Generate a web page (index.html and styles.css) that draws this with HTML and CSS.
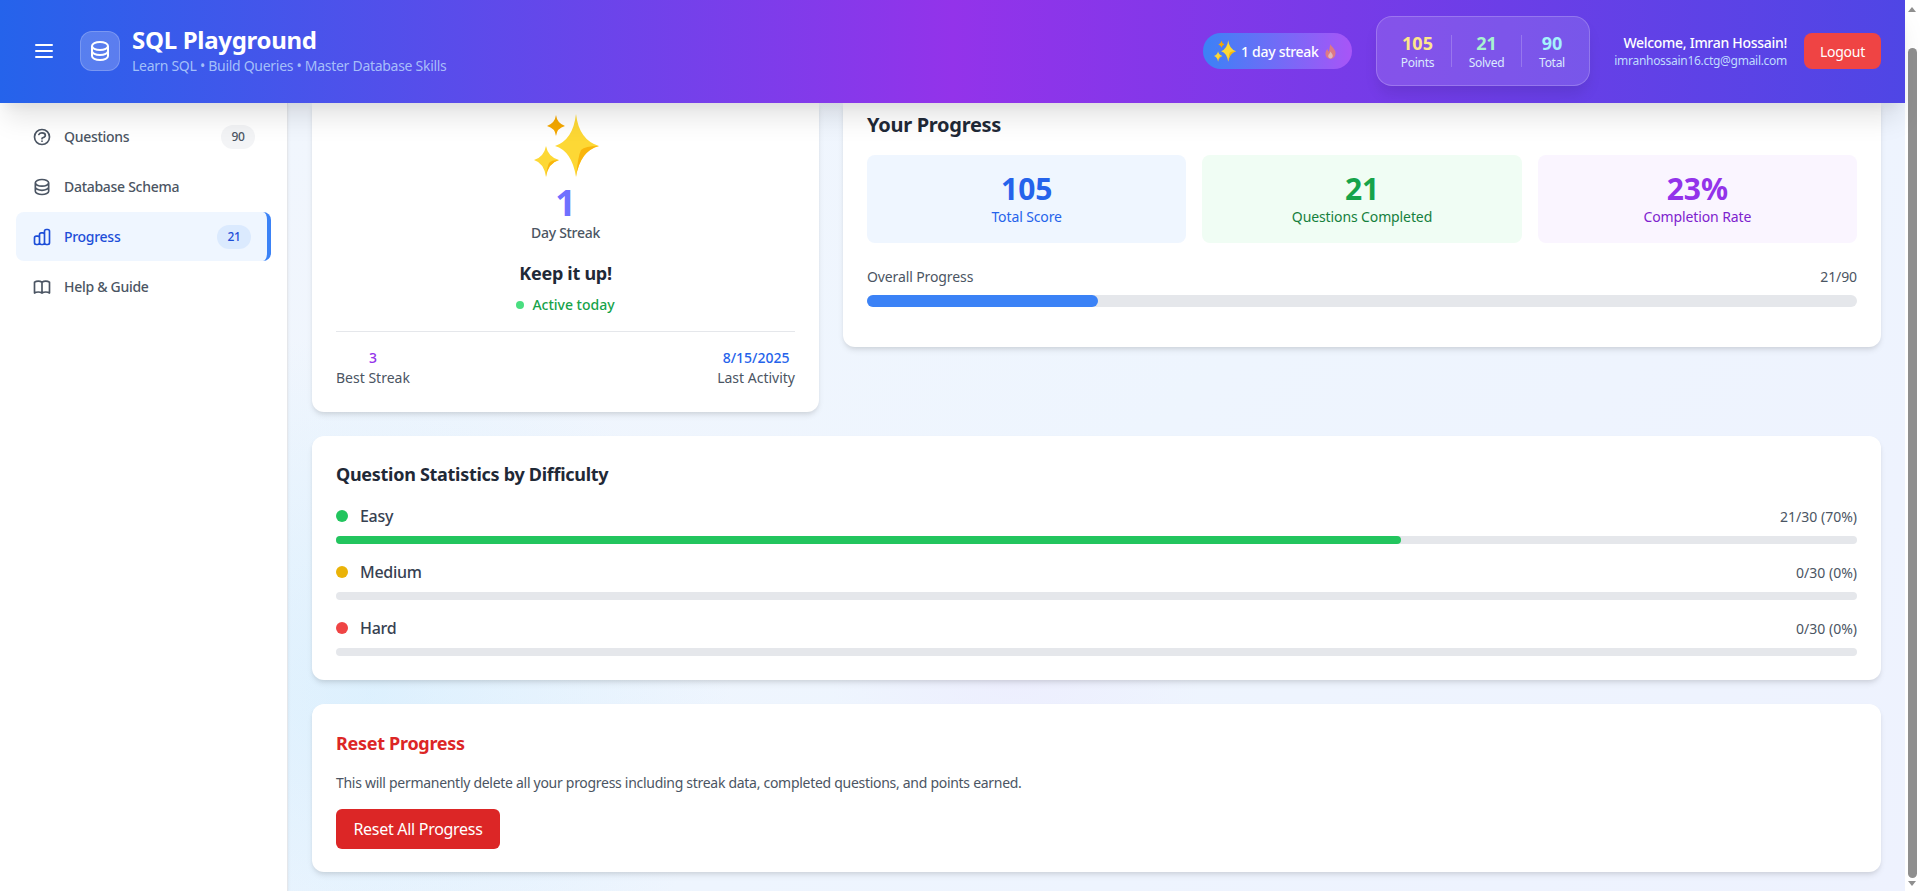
FILE: index.html
```html
<!DOCTYPE html>
<html lang="en">
<head>
    <meta charset="UTF-8">
    <meta name="viewport" content="width=device-width, initial-scale=1.0">
    <title>SQL Playground</title>
    <link rel="stylesheet" href="styles.css">
</head>
<body>

<svg class="defs" width="0" height="0">
    <symbol id="sparkles" viewBox="0 0 65 63">
        <path fill="#fdd835" d="M42 0Q45 26 65 32Q46 37 42 63Q38 37 21 32Q39 26 42 0Z"/>
        <path fill="#f9b50c" d="M42 63Q46 37 65 32Q51 32 47 36Q44 42 42 63Z"/>
        <path fill="#f5a800" d="M22 1Q23 9 31 12Q23 14 22 22Q21 14 13 12Q21 9 22 1Z"/>
        <path fill="#fdd835" d="M12 32Q14 43 25 46Q14 49 12 63Q10 49 0 46Q10 43 12 32Z"/>
        <path fill="#f9b50c" d="M12 63Q14 49 25 46Q17 46 15 49Q13 53 12 63Z"/>
    </symbol>
</svg>

<div class="page">
    <!-- Top bar -->
    <header class="topbar">
        <svg class="menu-icon" viewBox="0 0 24 24" fill="none" stroke="currentColor" stroke-width="2" stroke-linecap="round"><path d="M4 6h16M4 12h16M4 18h16"/></svg>
        <div class="logo">
            <svg viewBox="0 0 24 24" fill="none" stroke="currentColor" stroke-width="2" stroke-linecap="round" stroke-linejoin="round"><path d="M4 7v10c0 2.21 3.582 4 8 4s8-1.79 8-4V7M4 7c0 2.21 3.582 4 8 4s8-1.79 8-4M4 7c0-2.21 3.582-4 8-4s8 1.79 8 4m0 5c0 2.21-3.582 4-8 4s-8-1.79-8-4"/></svg>
        </div>
        <div class="brand">
            <h1>SQL Playground</h1>
            <p>Learn SQL • Build Queries • Master Database Skills</p>
        </div>

        <div class="streak-pill">
            <svg class="pill-sparkle"><use href="#sparkles"/></svg>
            <span>1 day streak</span>
            <svg class="pill-flame" viewBox="0 0 16 18"><path fill="#f4845f" d="M8 0c1 3 5 5 6 9 1 5-2 9-6 9s-7-3-6-8c.4-2 1.5-3 2.5-4 0 2 .7 3 1.5 3C7 7 6.500 3 8 0z"/><path fill="#fbd5a5" d="M8 9c.5 2 3 3 2.800 5.500C10.600 16.500 9.400 17.500 8 17.500s-2.800-1-2.800-3C5.200 12.500 7.500 11.500 8 9z"/></svg>
        </div>

        <div class="score-box">
            <div class="score score-first">
                <strong class="yellow">105</strong>
                <span>Points</span>
            </div>
            <div class="score">
                <strong class="mint">21</strong>
                <span>Solved</span>
            </div>
            <div class="score score-last">
                <strong class="cyan">90</strong>
                <span>Total</span>
            </div>
        </div>

        <div class="user">
            <div class="user-name">Welcome, Imran Hossain!</div>
            <div class="user-email">imranhossain16.ctg@gmail.com</div>
        </div>
        <button class="logout">Logout</button>
    </header>

    <div class="body-row">
        <!-- Sidebar -->
        <nav class="sidebar">
            <a class="nav-item">
                <svg viewBox="0 0 24 24" fill="none" stroke="currentColor" stroke-width="2" stroke-linecap="round" stroke-linejoin="round"><path d="M8.228 9c.549-1.165 2.030-2 3.772-2 2.210 0 4 1.343 4 3 0 1.400-1.278 2.575-3.006 2.907-.542.104-.994.540-.994 1.093m0 3h.01M21 12a9 9 0 11-18 0 9 9 0 0118 0z"/></svg>
                <span>Questions</span>
                <em class="badge">90</em>
            </a>
            <a class="nav-item">
                <svg viewBox="0 0 24 24" fill="none" stroke="currentColor" stroke-width="2" stroke-linecap="round" stroke-linejoin="round"><path d="M4 7v10c0 2.21 3.582 4 8 4s8-1.79 8-4V7M4 7c0 2.21 3.582 4 8 4s8-1.79 8-4M4 7c0-2.21 3.582-4 8-4s8 1.79 8 4m0 5c0 2.21-3.582 4-8 4s-8-1.79-8-4"/></svg>
                <span>Database Schema</span>
            </a>
            <a class="nav-item active">
                <svg viewBox="0 0 24 24" fill="none" stroke="currentColor" stroke-width="2" stroke-linecap="round" stroke-linejoin="round"><path d="M9 19v-6a2 2 0 00-2-2H5a2 2 0 00-2 2v6a2 2 0 002 2h2a2 2 0 002-2zm0 0V9a2 2 0 012-2h2a2 2 0 012 2v10m-6 0a2 2 0 002 2h2a2 2 0 002-2m0 0V5a2 2 0 012-2h2a2 2 0 012 2v14a2 2 0 01-2 2h-2a2 2 0 01-2-2z"/></svg>
                <span>Progress</span>
                <em class="badge">21</em>
            </a>
            <a class="nav-item">
                <svg viewBox="0 0 24 24" fill="none" stroke="currentColor" stroke-width="2" stroke-linecap="round" stroke-linejoin="round"><path d="M12 6.253v13m0-13C10.832 5.477 9.246 5 7.500 5S4.168 5.477 3 6.253v13C4.168 18.477 5.754 18 7.500 18s3.332.477 4.500 1.253m0-13C13.168 5.477 14.754 5 16.500 5c1.747 0 3.332.477 4.500 1.253v13C19.832 18.477 18.247 18 16.500 18c-1.746 0-3.332.477-4.500 1.253"/></svg>
                <span>Help &amp; Guide</span>
            </a>
        </nav>

        <!-- Main content, scrolled down a little under the top bar -->
        <main class="content">
            <div class="top-grid">
                <section class="card streak-card">
                    <svg class="big-sparkle"><use href="#sparkles"/></svg>
                    <div class="streak-number">1</div>
                    <div class="streak-label">Day Streak</div>
                    <div class="streak-msg">Keep it up!</div>
                    <div class="streak-active"><i></i>Active today</div>
                    <div class="streak-foot">
                        <div class="foot-col">
                            <b class="purple">3</b>
                            <span>Best Streak</span>
                        </div>
                        <div class="foot-col">
                            <b class="blue">8/15/2025</b>
                            <span>Last Activity</span>
                        </div>
                    </div>
                </section>

                <section class="card progress-card">
                    <h2>Your Progress</h2>
                    <div class="tiles">
                        <div class="tile tile-blue">
                            <strong>105</strong>
                            <span>Total Score</span>
                        </div>
                        <div class="tile tile-green">
                            <strong>21</strong>
                            <span>Questions Completed</span>
                        </div>
                        <div class="tile tile-purple">
                            <strong>23%</strong>
                            <span>Completion Rate</span>
                        </div>
                    </div>
                    <div class="overall-row">
                        <span>Overall Progress</span>
                        <span>21/90</span>
                    </div>
                    <div class="bar bar-big"><div class="fill fill-blue" style="width: 23.33%"></div></div>
                </section>
            </div>

            <section class="card stats-card">
                <h3>Question Statistics by Difficulty</h3>
                <div class="diff-row">
                    <i class="dot dot-green"></i>
                    <span class="diff-name">Easy</span>
                    <span class="diff-count">21/30 (70%)</span>
                </div>
                <div class="bar"><div class="fill fill-green" style="width: 70%"></div></div>
                <div class="diff-row">
                    <i class="dot dot-yellow"></i>
                    <span class="diff-name">Medium</span>
                    <span class="diff-count">0/30 (0%)</span>
                </div>
                <div class="bar"></div>
                <div class="diff-row">
                    <i class="dot dot-red"></i>
                    <span class="diff-name">Hard</span>
                    <span class="diff-count">0/30 (0%)</span>
                </div>
                <div class="bar"></div>
            </section>

            <section class="card reset-card">
                <h3>Reset Progress</h3>
                <p>This will permanently delete all your progress including streak data, completed questions, and points earned.</p>
                <button class="reset-btn">Reset All Progress</button>
            </section>
        </main>
    </div>
</div>

<!-- Browser scrollbar -->
<div class="scrollbar">
    <i class="arrow-up"></i>
    <div class="thumb"></div>
    <i class="arrow-down"></i>
</div>

</body>
</html>
```

FILE: styles.css
```css
* {
    box-sizing: border-box;
}
html, body {
    margin: 0;
    height: 891px;
    overflow: hidden;
}
body {
    display: flex;
    font-family: "Noto Sans", "Open Sans", sans-serif;
    letter-spacing: -0.018em;
    color: #374151;
    background-color: #fff;
}
h1, h2, h3, p {
    margin: 0;
}
button {
    letter-spacing: inherit;
}
.defs {
    position: absolute;
}
.page {
    width: 1905px;
    height: 891px;
    display: flex;
    flex-direction: column;
}

/* Top bar */
.topbar {
    position: relative;
    z-index: 2;
    height: 103px;
    flex-shrink: 0;
    display: flex;
    align-items: center;
    padding: 0 24px 1px;
    color: #fff;
    background: linear-gradient(90deg, #2563eb 0%, #9333ea 50%, #4f46e5 100%);
    box-shadow: 0 20px 25px -5px rgba(0, 0, 0, 0.1), 0 10px 10px -5px rgba(0, 0, 0, 0.04);
}
.menu-icon {
    width: 24px;
    height: 24px;
    margin: 0 24px 0 8px;
}
.logo {
    width: 40px;
    height: 40px;
    display: flex;
    align-items: center;
    justify-content: center;
    border-radius: 12px;
    background-color: rgba(255, 255, 255, 0.2);
    border: 1px solid rgba(255, 255, 255, 0.2);
}
.logo svg {
    width: 24px;
    height: 24px;
}
.brand {
    margin-left: 12px;
    margin-right: auto;
    padding-bottom: 2px;
}
.brand h1 {
    font-size: 24px;
    line-height: 32px;
    font-weight: 700;
}
.brand p {
    font-size: 14px;
    line-height: 20px;
    color: rgba(191, 219, 254, 0.8);
}
.streak-pill {
    width: 149px;
    height: 36px;
    display: flex;
    align-items: center;
    padding-left: 11px;
    border-radius: 18px;
    font-size: 14px;
    font-weight: 500;
    background: linear-gradient(90deg, #3b82f6, #a855f7);
}
.pill-sparkle {
    width: 22px;
    height: 22px;
    margin-right: 5px;
}
.pill-flame {
    width: 13px;
    height: 15px;
    margin-left: 5px;
    opacity: 0.75;
}
.score-box {
    width: 214px;
    height: 70px;
    margin-left: 24px;
    display: flex;
    align-items: center;
    padding: 0 7px;
    border-radius: 16px;
    background-color: rgba(255, 255, 255, 0.12);
    border: 1px solid rgba(255, 255, 255, 0.2);
    box-shadow: 0 10px 15px -3px rgba(0, 0, 0, 0.1);
}
.score {
    width: 70px;
    height: 32px;
    display: flex;
    flex-direction: column;
    align-items: center;
    justify-content: center;
    border-left: 1px solid rgba(255, 255, 255, 0.2);
}
.score-first {
    width: 67px;
    border-left: none;
}
.score-last {
    width: 61px;
}
.score strong {
    font-size: 18px;
    line-height: 24px;
    letter-spacing: 0;
}
.score span {
    font-size: 12px;
    line-height: 16px;
    color: #dbeafe;
}
.yellow {
    color: #fde68a;
}
.mint {
    color: #a7f3d0;
}
.cyan {
    color: #a5f3fc;
}
.user {
    width: 197px;
    margin-left: 0;
    text-align: right;
    margin-right: 17px;
}
.user-name {
    font-size: 14px;
    line-height: 20px;
    font-weight: 500;
}
.user-email {
    font-size: 12px;
    line-height: 16px;
    color: #bfdbfe;
}
.logout {
    width: 77px;
    height: 36px;
    border: none;
    border-radius: 8px;
    color: #fff;
    background-color: #ef4444;
    font-family: inherit;
    font-size: 14px;
}

/* Sidebar + main */
.body-row {
    flex: 1;
    display: flex;
    min-height: 0;
}
.sidebar {
    width: 288px;
    flex-shrink: 0;
    padding: 9px 16px 0;
    background-color: #fff;
    border-right: 1px solid #e5e7eb;
    box-shadow: 0 1px 3px rgba(0, 0, 0, 0.08);
    position: relative;
    z-index: 1;
}
.nav-item {
    height: 49px;
    margin-bottom: 1px;
    display: flex;
    align-items: center;
    padding: 0 16px;
    color: #4b5563;
    font-size: 14px;
    font-weight: 500;
    border-radius: 8px;
}
.nav-item svg {
    width: 20px;
    height: 20px;
    margin-right: 12px;
    flex-shrink: 0;
}
.badge {
    margin-left: auto;
    min-width: 34px;
    height: 24px;
    line-height: 24px;
    text-align: center;
    border-radius: 12px;
    font-size: 12px;
    font-style: normal;
    background-color: #f3f4f6;
}
.nav-item.active {
    width: 255px;
    color: #1d4ed8;
    background-color: #eff6ff;
    border-right: 4px solid #3b82f6;
}
.active .badge {
    background-color: #dbeafe;
    margin-right: 0;
}
.content {
    flex: 1;
    min-width: 0;
    padding: 0 24px;
    overflow: hidden;
    background:
        radial-gradient(circle at 5% 75%, rgba(186, 230, 253, 0.35), transparent 22%),
        radial-gradient(circle at 45% 70%, rgba(233, 213, 255, 0.22), transparent 18%),
        linear-gradient(135deg, #f1f6fd 0%, #eef5fe 50%, #eef2fe 100%);
}
.card {
    background-color: #fff;
    border-radius: 12px;
    box-shadow: 0 4px 6px -1px rgba(0, 0, 0, 0.1), 0 2px 4px -1px rgba(0, 0, 0, 0.06);
    padding: 24px;
}
.top-grid {
    display: grid;
    grid-template-columns: repeat(3, 1fr);
    gap: 24px;
    align-items: start;
    margin-bottom: 24px;
}

/* Streak card */
.streak-card {
    height: 309px;
    padding-top: 11px;
    border-radius: 0 0 12px 12px;
    text-align: center;
}
.big-sparkle {
    display: block;
    width: 65px;
    height: 63px;
    margin: 0 auto 6px;
    transform: translateX(1px);
}
.streak-number {
    font-size: 36px;
    line-height: 40px;
    font-weight: 700;
    color: #7070ff;
}
.streak-label {
    font-size: 14px;
    line-height: 20px;
    font-weight: 500;
    color: #4b5563;
}
.streak-msg {
    margin-top: 16px;
    font-size: 18px;
    line-height: 28px;
    font-weight: 700;
    color: #1f2937;
}
.streak-active {
    margin-top: 8px;
    display: flex;
    align-items: center;
    justify-content: center;
    gap: 8px;
    font-size: 14px;
    line-height: 20px;
    font-weight: 500;
    letter-spacing: 0;
    color: #16a34a;
}
.streak-active i {
    width: 8px;
    height: 8px;
    border-radius: 50%;
    background-color: #4ade80;
}
.streak-foot {
    margin-top: 16px;
    padding-top: 16px;
    border-top: 1px solid #e5e7eb;
    display: flex;
    justify-content: space-between;
    font-size: 14px;
    line-height: 20px;
    letter-spacing: 0;
    color: #4b5563;
}
.foot-col b {
    display: block;
    font-weight: 500;
}
.purple {
    color: #9333ea;
}
.blue {
    color: #2563eb;
}

/* Progress card */
.progress-card {
    grid-column: span 2;
    height: 244px;
    padding-top: 8px;
    border-radius: 0 0 12px 12px;
}
.progress-card h2 {
    font-size: 20px;
    line-height: 28px;
    font-weight: 700;
    color: #1f2937;
}
.tiles {
    display: grid;
    grid-template-columns: repeat(3, 1fr);
    gap: 16px;
    margin-top: 16px;
}
.tile {
    height: 88px;
    display: flex;
    flex-direction: column;
    align-items: center;
    justify-content: center;
    border-radius: 8px;
    font-size: 14px;
    line-height: 20px;
    letter-spacing: -0.008em;
}
.tile strong {
    font-size: 30px;
    line-height: 36px;
}
.tile-blue {
    background-color: #eff6ff;
    color: #2563eb;
}
.tile-green {
    background-color: #f0fdf4;
    color: #15803d;
}
.tile-green strong {
    color: #16a34a;
}
.tile-purple {
    background-color: #faf5ff;
    color: #7e22ce;
}
.tile-purple strong {
    color: #9333ea;
}
.overall-row {
    margin: 24px 0 8px;
    display: flex;
    justify-content: space-between;
    font-size: 14px;
    line-height: 20px;
    letter-spacing: -0.008em;
    color: #4b5563;
}
.bar {
    height: 8px;
    border-radius: 4px;
    background-color: #e5e7eb;
}
.bar-big {
    height: 12px;
    border-radius: 6px;
}
.fill {
    height: 100%;
    border-radius: inherit;
}
.fill-blue {
    background-color: #3b82f6;
}
.fill-green {
    background-color: #22c55e;
}

/* Difficulty stats */
.stats-card {
    height: 244px;
    margin-bottom: 24px;
}
.stats-card h3, .reset-card h3 {
    font-size: 18px;
    line-height: 28px;
    font-weight: 700;
    color: #1f2937;
}
.diff-row {
    height: 24px;
    margin: 16px 0 8px;
    display: flex;
    align-items: center;
}
.dot {
    width: 12px;
    height: 12px;
    border-radius: 50%;
    margin-right: 12px;
}
.dot-green {
    background-color: #22c55e;
}
.dot-yellow {
    background-color: #eab308;
}
.dot-red {
    background-color: #ef4444;
}
.diff-name {
    font-size: 16px;
    font-weight: 500;
    color: #374151;
}
.diff-count {
    margin-left: auto;
    font-size: 14px;
    letter-spacing: 0;
    color: #4b5563;
}

/* Reset card */
.reset-card {
    height: 168px;
}
.reset-card h3 {
    color: #dc2626;
    margin-bottom: 16px;
    margin-top: 1px;
}
.reset-card p {
    font-size: 14px;
    line-height: 20px;
    color: #4b5563;
    margin-bottom: 16px;
}
.reset-btn {
    width: 164px;
    height: 40px;
    border: none;
    border-radius: 6px;
    color: #fff;
    background-color: #dc2626;
    font-family: inherit;
    font-size: 16px;
}

/* Scrollbar */
.scrollbar {
    width: 15px;
    height: 891px;
    position: relative;
    background-color: #fff;
}
.thumb {
    position: absolute;
    top: 48px;
    left: 3px;
    width: 9px;
    height: 830px;
    border-radius: 5px;
    background-color: #8f8f8f;
}
.arrow-up, .arrow-down {
    position: absolute;
    left: 3px;
    border-left: 4.5px solid transparent;
    border-right: 4.5px solid transparent;
}
.arrow-up {
    top: 7px;
    border-bottom: 5px solid #8f8f8f;
}
.arrow-down {
    bottom: 5px;
    border-top: 5px solid #8f8f8f;
}
```
